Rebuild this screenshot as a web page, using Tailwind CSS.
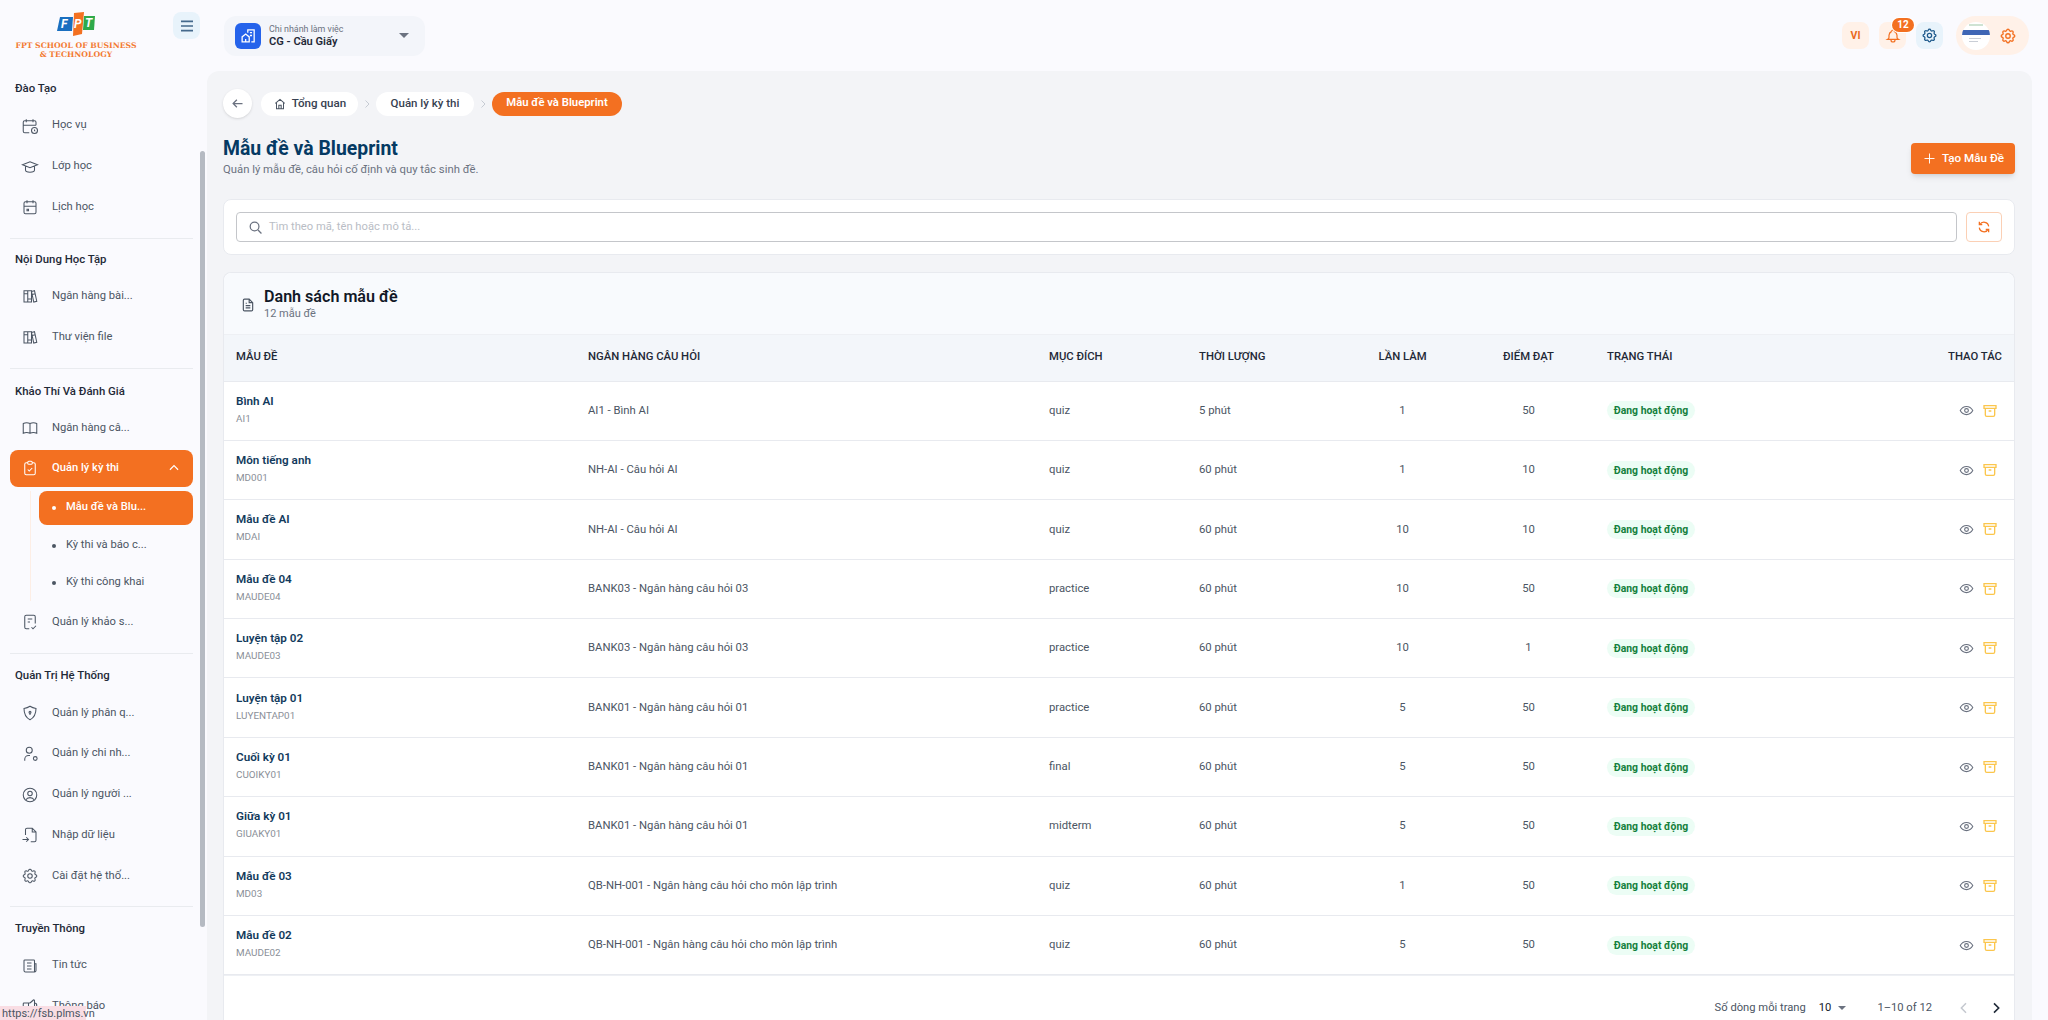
<!DOCTYPE html>
<html lang="vi">
<head>
    <meta charset="UTF-8">
    <title>Mẫu đề và Blueprint</title>
    <script src="https://cdn.jsdelivr.net/npm/@tailwindcss/browser@4"></script>
</head>
<body class="h-screen flex overflow-hidden bg-[#fafafe] font-[Roboto,sans-serif] text-[11.2px] text-[#4b5563]">
    <!-- icon sprite -->
    <svg class="hidden">
        <symbol id="i-cal-clock" viewBox="0 0 24 24"><path d="M11 21H5a2 2 0 0 1-2-2V7a2 2 0 0 1 2-2h13a2 2 0 0 1 2 2v4M16 3v4M7 3v4M3 11h17"/><circle cx="18" cy="18" r="4"/><path d="M18 16.500V18l1 1"/></symbol>
        <symbol id="i-cap" viewBox="0 0 24 24"><path d="M22 9 12 5 2 9l10 4 10-4ZM6 11v5c0 1.700 2.700 3 6 3s6-1.300 6-3v-5"/></symbol>
        <symbol id="i-cal" viewBox="0 0 24 24"><rect x="4" y="5" width="16" height="16" rx="2"/><path d="M16 3v4M8 3v4M4 11h16M8 15h2v2H8z"/></symbol>
        <symbol id="i-books" viewBox="0 0 24 24"><path d="M4 5h5v15H4zM9 5h5v15H9zM4 9h5M9 16h5M14 6l4-1 3 14-4 1zM15 10l4-1"/></symbol>
        <symbol id="i-book" viewBox="0 0 24 24"><path d="M3 19V6c3-1.500 6-1.500 9 0 3-1.500 6-1.500 9 0v13c-3-1.500-6-1.500-9 0-3-1.500-6-1.500-9 0ZM12 6v13"/></symbol>
        <symbol id="i-clip" viewBox="0 0 24 24"><path d="M9 5H7a2 2 0 0 0-2 2v12a2 2 0 0 0 2 2h10a2 2 0 0 0 2-2V7a2 2 0 0 0-2-2h-2"/><rect x="9" y="3" width="6" height="4" rx="1.500"/><path d="m9 14 2 2 4-4"/></symbol>
        <symbol id="i-survey" viewBox="0 0 24 24"><path d="M11 21H7a2 2 0 0 1-2-2V5a2 2 0 0 1 2-2h10a2 2 0 0 1 2 2v9M9 8h6M9 12h3M14 19l2 2 4-4"/></symbol>
        <symbol id="i-shield" viewBox="0 0 24 24"><path d="M12 3c3 2 5.500 2.600 8 3 0 7-2 12-8 15-6-3-8-8-8-15 2.500-.4 5-1 8-3Z"/><circle cx="12" cy="11" r="1.300"/><path d="M12 12v2.500"/></symbol>
        <symbol id="i-branch" viewBox="0 0 24 24"><circle cx="11" cy="7" r="4"/><path d="M5 21v-2a5 5 0 0 1 5-5h2"/><circle cx="19" cy="18" r="2.500"/></symbol>
        <symbol id="i-user" viewBox="0 0 24 24"><circle cx="12" cy="12" r="9"/><circle cx="12" cy="10" r="3"/><path d="M6.500 18.500c1-2 3-3 5.500-3s4.500 1 5.500 3"/></symbol>
        <symbol id="i-import" viewBox="0 0 24 24"><path d="M6 12V5a2 2 0 0 1 2-2h7l5 5v11a2 2 0 0 1-2 2h-5M15 3v5h5M2 18h8M7 15l3 3-3 3"/></symbol>
        <symbol id="i-gear" viewBox="0 0 24 24"><path d="M10.300 4.300c.4-1.800 3-1.800 3.400 0a1.700 1.700 0 0 0 2.600 1.100c1.500-.9 3.300.8 2.400 2.400a1.700 1.700 0 0 0 1 2.500c1.800.4 1.800 3 0 3.400a1.700 1.700 0 0 0-1 2.600c.9 1.500-.9 3.300-2.400 2.400a1.700 1.700 0 0 0-2.600 1c-.4 1.800-3 1.800-3.400 0a1.700 1.700 0 0 0-2.600-1c-1.500.9-3.300-.9-2.400-2.400a1.700 1.700 0 0 0-1-2.600c-1.800-.4-1.800-3 0-3.400a1.700 1.700 0 0 0 1-2.500c-.9-1.600.9-3.300 2.400-2.400a1.700 1.700 0 0 0 2.600-1.100Z"/><circle cx="12" cy="12" r="3"/></symbol>
        <symbol id="i-news" viewBox="0 0 24 24"><path d="M5 4h12a1 1 0 0 1 1 1v15H6a2 2 0 0 1-2-2V5a1 1 0 0 1 1-1ZM18 9h2v9a2 2 0 0 1-2 2M8 8h6M8 12h6M8 16h6"/></symbol>
        <symbol id="i-megaphone" viewBox="0 0 24 24"><path d="M18 8a3 3 0 0 1 0 6M10 8v11a1 1 0 0 1-1 1H8a1 1 0 0 1-1-1v-5M12 8l4.500-4a1 1 0 0 1 1.500.8v12.400a1 1 0 0 1-1.500.8L12 14H4a1 1 0 0 1-1-1V9a1 1 0 0 1 1-1h8"/></symbol>
        <symbol id="i-eye" viewBox="0 0 24 24"><path d="M2 12c2.500-4.500 6-6.500 10-6.500s7.500 2 10 6.500c-2.500 4.500-6 6.500-10 6.500S4.500 16.500 2 12Z"/><circle cx="12" cy="12" r="3"/></symbol>
        <symbol id="i-archive" viewBox="0 0 24 24"><path d="M3 4h18v4H3zM5 8v10a2 2 0 0 0 2 2h10a2 2 0 0 0 2-2V8M10 12h4"/></symbol>
    </svg>

    <!-- sidebar -->
    <aside class="relative w-[207px] shrink-0 overflow-hidden">
        <div class="relative h-[71.500px]">
            <div class="flex flex-col items-center w-[152px] pt-[12px]">
                <svg width="42" height="24" viewBox="0 0 40 24">
                    <path d="M4 5h13l-1 14H1z" fill="#1a6fc0"/>
                    <path d="M18 1l10-1-2 22-9 2z" fill="#f37021"/>
                    <path d="M28 4h11l-1 14H27z" fill="#2eaa4a"/>
                    <text x="5" y="16" fill="#fff" font-size="12" font-weight="700" font-style="italic">F</text>
                    <text x="18" y="16" fill="#fff" font-size="12" font-weight="700" font-style="italic">P</text>
                    <text x="29" y="15" fill="#fff" font-size="12" font-weight="700" font-style="italic">T</text>
                </svg>
                <div class="mt-[5px] text-center font-['DejaVu_Serif',serif] font-bold text-[7.700px] leading-[9px] whitespace-nowrap text-[#f37b33]">FPT SCHOOL OF BUSINESS<br>&amp; TECHNOLOGY</div>
            </div>
            <button class="absolute left-[173px] top-[12px] w-[27px] h-[27px] rounded-lg bg-[#e8f3fb] flex items-center justify-center">
                <svg class="w-[16px] h-[16px] stroke-[#44698c]" viewBox="0 0 24 24" fill="none" stroke-width="2.400"><path d="M3 5h18M3 12h18M3 19h18"/></svg>
            </button>
        </div>

        <nav class="pl-[10px] w-[193px] stroke-[#4b5563]">
            <h3 class="h-[34px] pl-[5px] flex items-center font-medium text-[11.400px] text-[#1f2937]">Đào Tạo</h3>
            <a class="h-[40.700px] flex items-center"><svg class="ml-[11px] w-[18px] h-[18px]" fill="none" stroke-width="1.400"><use href="#i-cal-clock"/></svg><span class="ml-[13px]">Học vụ</span></a>
            <a class="h-[40.700px] flex items-center"><svg class="ml-[11px] w-[18px] h-[18px]" fill="none" stroke-width="1.400"><use href="#i-cap"/></svg><span class="ml-[13px]">Lớp học</span></a>
            <a class="h-[40.700px] flex items-center"><svg class="ml-[11px] w-[18px] h-[18px]" fill="none" stroke-width="1.400"><use href="#i-cal"/></svg><span class="ml-[13px]">Lịch học</span></a>
            <hr class="mt-[10px] mb-[4.500px] border-[#e9ebef]">

            <h3 class="h-[33px] pl-[5px] flex items-center font-medium text-[11.400px] text-[#1f2937]">Nội Dung Học Tập</h3>
            <a class="h-[40.700px] flex items-center"><svg class="ml-[11px] w-[18px] h-[18px]" fill="none" stroke-width="1.400"><use href="#i-books"/></svg><span class="ml-[13px]">Ngân hàng bài...</span></a>
            <a class="h-[40.700px] flex items-center"><svg class="ml-[11px] w-[18px] h-[18px]" fill="none" stroke-width="1.400"><use href="#i-books"/></svg><span class="ml-[13px]">Thư viện file</span></a>
            <hr class="mt-[11px] mb-[5.500px] border-[#e9ebef]">

            <h3 class="h-[33px] pl-[5px] flex items-center font-medium text-[11.400px] text-[#1f2937]">Khảo Thí Và Đánh Giá</h3>
            <a class="h-[40.700px] flex items-center"><svg class="ml-[11px] w-[18px] h-[18px]" fill="none" stroke-width="1.400"><use href="#i-book"/></svg><span class="ml-[13px]">Ngân hàng câ...</span></a>
            <a class="mt-[1px] h-[37.500px] flex items-center rounded-lg bg-[#f37021] text-white font-medium stroke-white"><svg class="ml-[11px] w-[18px] h-[18px]" fill="none" stroke-width="1.400"><use href="#i-clip"/></svg><span class="ml-[13px]">Quản lý kỳ thi</span>
                <svg class="ml-auto mr-[12px] w-[14px] h-[14px]" viewBox="0 0 24 24" fill="none" stroke-width="2"><path d="m5 15 7-7 7 7"/></svg>
            </a>
            <div class="relative mt-[3.500px] pl-[29px]">
                <div class="absolute left-[20px] top-0 h-[110px] w-px bg-[#fdeee5]"></div>
                <a class="h-[34.500px] flex items-center rounded-lg bg-[#f37021] text-white font-medium"><span class="ml-[13px] w-[4px] h-[4px] rounded-full bg-white"></span><span class="ml-[10px]">Mẫu đề và Blu...</span></a>
                <a class="mt-[2px] h-[37px] flex items-center"><span class="ml-[13px] w-[4px] h-[4px] rounded-full bg-[#4b5563]"></span><span class="ml-[10px]">Kỳ thi và báo c...</span></a>
                <a class="h-[37px] flex items-center"><span class="ml-[13px] w-[4px] h-[4px] rounded-full bg-[#4b5563]"></span><span class="ml-[10px]">Kỳ thi công khai</span></a>
            </div>
            <a class="mt-[1px] h-[40.700px] flex items-center"><svg class="ml-[11px] w-[18px] h-[18px]" fill="none" stroke-width="1.400"><use href="#i-survey"/></svg><span class="ml-[13px]">Quản lý khảo s...</span></a>
            <hr class="mt-[10.500px] mb-[4.500px] border-[#e9ebef]">

            <h3 class="h-[34px] pl-[5px] flex items-center font-medium text-[11.400px] text-[#1f2937]">Quản Trị Hệ Thống</h3>
            <a class="h-[40.700px] flex items-center"><svg class="ml-[11px] w-[18px] h-[18px]" fill="none" stroke-width="1.400"><use href="#i-shield"/></svg><span class="ml-[13px]">Quản lý phân q...</span></a>
            <a class="h-[40.700px] flex items-center"><svg class="ml-[11px] w-[18px] h-[18px]" fill="none" stroke-width="1.400"><use href="#i-branch"/></svg><span class="ml-[13px]">Quản lý chi nh...</span></a>
            <a class="h-[40.700px] flex items-center"><svg class="ml-[11px] w-[18px] h-[18px]" fill="none" stroke-width="1.400"><use href="#i-user"/></svg><span class="ml-[13px]">Quản lý người ...</span></a>
            <a class="h-[40.700px] flex items-center"><svg class="ml-[11px] w-[18px] h-[18px]" fill="none" stroke-width="1.400"><use href="#i-import"/></svg><span class="ml-[13px]">Nhập dữ liệu</span></a>
            <a class="h-[40.700px] flex items-center"><svg class="ml-[11px] w-[18px] h-[18px]" fill="none" stroke-width="1.400"><use href="#i-gear"/></svg><span class="ml-[13px]">Cài đặt hệ thố...</span></a>
            <hr class="mt-[10px] mb-[5px] border-[#e9ebef]">

            <h3 class="h-[33px] pl-[5px] flex items-center font-medium text-[11.400px] text-[#1f2937]">Truyền Thông</h3>
            <a class="h-[40.700px] flex items-center"><svg class="ml-[11px] w-[18px] h-[18px]" fill="none" stroke-width="1.400"><use href="#i-news"/></svg><span class="ml-[13px]">Tin tức</span></a>
            <a class="h-[40.700px] flex items-center"><svg class="ml-[11px] w-[18px] h-[18px]" fill="none" stroke-width="1.400"><use href="#i-megaphone"/></svg><span class="ml-[13px]">Thông báo</span></a>
        </nav>

        <!-- scrollbar thumb -->
        <div class="absolute left-[200px] top-[151px] w-[5px] h-[776px] rounded-full bg-[#b5bac2]"></div>
    </aside>

    <div class="flex-1 min-w-0 flex flex-col">
        <!-- top bar -->
        <header class="h-[71px] shrink-0 flex items-center pl-[17px] pr-[19px]">
            <div class="w-[201px] h-[40px] rounded-xl bg-[#f3f5fa] flex items-center pl-[11px]">
                <span class="w-[26px] h-[26px] rounded-md bg-[#2563eb] flex items-center justify-center">
                    <svg class="w-[17px] h-[17px] stroke-white" viewBox="0 0 24 24" fill="none" stroke-width="1.800"><path d="M3 21v-7l5-4 5 4v7zM8 21v-4M11 8V4h9v17h-4M14 8h3M14 12h3"/></svg>
                </span>
                <div class="ml-[8px] flex flex-col">
                    <span class="text-[8.900px] leading-[12px] text-[#6b7280]">Chi nhánh làm việc</span>
                    <span class="text-[11.100px] leading-[14px] font-semibold text-[#1f2937]">CG - Cầu Giấy</span>
                </div>
                <span class="ml-auto mr-[16px] w-0 h-0 border-x-[5px] border-x-transparent border-t-[5px] border-t-[#6b7280]"></span>
            </div>
            <div class="ml-auto flex items-center">
                <button class="w-[27px] h-[27px] rounded-lg bg-[#fff1e8] text-[10.500px] font-bold text-[#ea6a20]">VI</button>
                <button class="relative ml-[10px] w-[27px] h-[27px] rounded-lg bg-[#fff1e8] flex items-center justify-center">
                    <svg class="w-[16px] h-[16px] stroke-[#f37021]" viewBox="0 0 24 24" fill="none" stroke-width="1.800"><path d="M10 5a2 2 0 1 1 4 0 7 7 0 0 1 4 6v3a4 4 0 0 0 2 3H4a4 4 0 0 0 2-3v-3a7 7 0 0 1 4-6M9 17v1a3 3 0 0 0 6 0v-1"/></svg>
                    <span class="absolute left-[13px] top-[-4px] w-[22px] h-[14px] rounded-full bg-[#f37021] ring-1 ring-white text-[10px] leading-[14px] font-bold text-white">12</span>
                </button>
                <button class="ml-[10px] w-[27px] h-[27px] rounded-lg bg-[#e8f3fb] flex items-center justify-center">
                    <svg class="w-[17px] h-[17px] stroke-[#1f5a8c]" fill="none" stroke-width="1.800"><use href="#i-gear"/></svg>
                </button>
                <div class="ml-[13px] w-[73px] h-[39px] rounded-full bg-[#fff1e8] flex items-center pl-[6px]">
                    <div class="w-[28px] h-[28px] rounded-full bg-white overflow-hidden flex flex-col">
                        <div class="mt-[2px] mx-[7px] h-[2px] bg-[#cfe3d3]"></div>
                        <div class="mt-[4px] h-[5px] bg-[#3f66b5]"></div>
                        <div class="mt-[3px] ml-[7px] w-[12px] h-px bg-[#c9ced6]"></div>
                        <div class="mt-[2px] ml-[7px] w-[9px] h-px bg-[#c9ced6]"></div>
                    </div>
                    <svg class="ml-[9px] w-[18px] h-[18px] stroke-[#f37021]" fill="none" stroke-width="1.800"><use href="#i-gear"/></svg>
                </div>
            </div>
        </header>

        <!-- content -->
        <main class="flex-1 min-h-0 mr-[16px] pl-[16px] pr-[17px] rounded-t-xl bg-[#f3f4f7] overflow-hidden">
            <div class="pt-[18px] flex items-center">
                <button class="w-[29px] h-[29px] rounded-full bg-white shadow-sm flex items-center justify-center">
                    <svg class="w-[15px] h-[15px] stroke-[#6b7280]" viewBox="0 0 24 24" fill="none" stroke-width="2"><path d="M20 12H5M11 6l-6 6 6 6"/></svg>
                </button>
                <a class="ml-[9px] h-[24px] w-[97px] rounded-full bg-white flex items-center justify-center font-medium text-[11.600px] text-[#374151]">
                    <svg class="mr-[5px] w-[14px] h-[14px] stroke-[#4b5563]" viewBox="0 0 24 24" fill="none" stroke-width="1.800"><path d="M4 11l8-7 8 7M6 9v11h12V9M10 20v-6h4v6"/></svg>Tổng quan
                </a>
                <svg class="mx-[3px] w-[12px] h-[12px] stroke-[#c6cbd3]" viewBox="0 0 24 24" fill="none" stroke-width="2"><path d="m9 5 7 7-7 7"/></svg>
                <a class="h-[24px] w-[98px] rounded-full bg-white flex items-center justify-center font-medium text-[11.500px] text-[#374151]">Quản lý kỳ thi</a>
                <svg class="mx-[3px] w-[12px] h-[12px] stroke-[#c6cbd3]" viewBox="0 0 24 24" fill="none" stroke-width="2"><path d="m9 5 7 7-7 7"/></svg>
                <a class="h-[24px] w-[130px] rounded-full bg-[#f37021] flex items-center justify-center font-semibold text-[11.300px] text-white">Mẫu đề và Blueprint</a>
            </div>

            <div class="mt-[18px] flex items-start justify-between">
                <div>
                    <h1 class="text-[19.400px] leading-[26px] font-bold text-[#053a63]">Mẫu đề và Blueprint</h1>
                    <p class="text-[11.300px] leading-[16px] text-[#6b7280]">Quản lý mẫu đề, câu hỏi cố định và quy tắc sinh đề.</p>
                </div>
                <button class="mt-[7px] w-[104px] h-[31px] rounded bg-[#f37021] shadow-md flex items-center justify-center text-[11.700px] text-white font-medium">
                    <svg class="mr-[5px] w-[15px] h-[15px] stroke-white" viewBox="0 0 24 24" fill="none" stroke-width="1.500"><path d="M12 4v16M4 12h16"/></svg>Tạo Mẫu Đề
                </button>
            </div>

            <!-- search -->
            <div class="mt-[21px] h-[56px] rounded-lg bg-white border border-[#e8eaef] flex items-center px-[12px]">
                <div class="flex-1 h-[30px] rounded border border-[#c4c6ca] flex items-center pl-[11px]">
                    <svg class="w-[15px] h-[15px] stroke-[#6b7280]" viewBox="0 0 24 24" fill="none" stroke-width="2"><circle cx="10.500" cy="10.500" r="7"/><path d="m16 16 5.500 5.500"/></svg>
                    <span class="ml-[6px] text-[#b9bdc5]">Tìm theo mã, tên hoặc mô tả...</span>
                </div>
                <button class="ml-[9px] w-[36px] h-[30px] rounded border border-[#fbd0b5] flex items-center justify-center">
                    <svg class="w-[14px] h-[14px] stroke-[#f37021]" viewBox="0 0 24 24" fill="none" stroke-width="2.200"><path d="M20 11A8 8 0 0 0 5 8M4 3v5h5M4 13a8 8 0 0 0 15 3M20 21v-5h-5"/></svg>
                </button>
            </div>

            <!-- list -->
            <section class="mt-[17px] rounded-t-lg bg-white border-x border-t border-[#e8eaef]">
                <div class="h-[62px] rounded-t-lg bg-[#f8fafd] flex items-center pl-[17px] border-b border-[#eef0f4]">
                    <svg class="w-[14px] h-[16px] mt-[2px] stroke-[#4b5563]" viewBox="0 0 24 24" fill="none" stroke-width="2"><path d="M14 2H6a2 2 0 0 0-2 2v16a2 2 0 0 0 2 2h12a2 2 0 0 0 2-2V8zM14 2v6h6M8 13h8M8 17h8M8 9h2"/></svg>
                    <div class="ml-[9px]">
                        <h2 class="text-[16.100px] leading-[21px] font-semibold text-[#111827]">Danh sách mẫu đề</h2>
                        <p class="text-[11px] leading-[14px] text-[#6b7280]">12 mẫu đề</p>
                    </div>
                </div>
                <table class="w-full table-fixed border-collapse">
                    <thead>
                        <tr class="h-[46px] bg-[#f3f6fa] border-b border-[#e8eaef] text-[11.300px] font-medium uppercase text-[#1f2937]">
                            <th class="w-[363px] pl-[12px] text-left font-medium">Mẫu đề</th>
                            <th class="w-[462px] pl-[1px] text-left font-medium">Ngân hàng câu hỏi</th>
                            <th class="w-[150px] text-left font-medium">Mục đích</th>
                            <th class="w-[140px] text-left font-medium">Thời lượng</th>
                            <th class="w-[127px] text-center font-medium">Lần làm</th>
                            <th class="w-[125px] text-center font-medium">Điểm đạt</th>
                            <th class="w-[130px] pl-[16px] text-left font-medium">Trạng thái</th>
                            <th class="pr-[12px] text-right font-medium">Thao tác</th>
                        </tr>
                    </thead>
                    <tbody id="rows"></tbody>
                </table>
                <div class="h-[64px] flex items-center justify-end border-t border-[#eef0f4] text-[11.200px] text-[#4b5563]">
                    <span>Số dòng mỗi trang</span>
                    <span class="ml-[13px] text-[#111827]">10</span>
                    <span class="ml-[7px] w-0 h-0 border-x-[4px] border-x-transparent border-t-[4px] border-t-[#6b7280]"></span>
                    <span class="ml-[31px]">1–10 of 12</span>
                    <svg class="ml-[24px] w-[16px] h-[16px] stroke-[#c4c8cf]" viewBox="0 0 24 24" fill="none" stroke-width="2.200"><path d="m15 5-7 7 7 7"/></svg>
                    <svg class="ml-[16px] mr-[10px] w-[16px] h-[16px] stroke-[#1f2937]" viewBox="0 0 24 24" fill="none" stroke-width="2.400"><path d="m9 5 7 7-7 7"/></svg>
                </div>
            </section>
        </main>
    </div>

    <!-- link status bubble -->
    <div class="absolute left-0 bottom-0 h-[14px] w-[86px] bg-[#f9dde4] text-[11px] leading-[15px] pl-[2px] text-[#4b5563]">https://fsb.plms.vn</div>

    <script>
        const rows = [
            ['Bình AI', 'AI1', 'AI1 - Bình AI', 'quiz', '5 phút', 1, 50],
            ['Môn tiếng anh', 'MD001', 'NH-AI - Câu hỏi AI', 'quiz', '60 phút', 1, 10],
            ['Mẫu đề AI', 'MDAI', 'NH-AI - Câu hỏi AI', 'quiz', '60 phút', 10, 10],
            ['Mẫu đề 04', 'MAUDE04', 'BANK03 - Ngân hàng câu hỏi 03', 'practice', '60 phút', 10, 50],
            ['Luyện tập 02', 'MAUDE03', 'BANK03 - Ngân hàng câu hỏi 03', 'practice', '60 phút', 10, 1],
            ['Luyện tập 01', 'LUYENTAP01', 'BANK01 - Ngân hàng câu hỏi 01', 'practice', '60 phút', 5, 50],
            ['Cuối kỳ 01', 'CUOIKY01', 'BANK01 - Ngân hàng câu hỏi 01', 'final', '60 phút', 5, 50],
            ['Giữa kỳ 01', 'GIUAKY01', 'BANK01 - Ngân hàng câu hỏi 01', 'midterm', '60 phút', 5, 50],
            ['Mẫu đề 03', 'MD03', 'QB-NH-001 - Ngân hàng câu hỏi cho môn lập trình', 'quiz', '60 phút', 1, 50],
            ['Mẫu đề 02', 'MAUDE02', 'QB-NH-001 - Ngân hàng câu hỏi cho môn lập trình', 'quiz', '60 phút', 5, 50],
        ];
        document.getElementById('rows').innerHTML = rows.map(r => `
            <tr class="h-[59.400px] border-b border-[#e8eaef] text-[11.300px] text-[#4b5563]">
                <td class="pl-[12px] pb-[2px]">
                    <div class="text-[11.700px] leading-[17px] font-semibold text-[#123a5c]">${r[0]}</div>
                    <div class="mt-[1px] text-[9.900px] leading-[16px] text-[#8a8f98]">${r[1]}</div>
                </td>
                <td class="pl-[1px] pt-[1px]">${r[2]}</td>
                <td class="pt-[1px]">${r[3]}</td>
                <td class="pt-[1px]">${r[4]}</td>
                <td class="pt-[1px] text-center">${r[5]}</td>
                <td class="pt-[1px] text-center">${r[6]}</td>
                <td class="pl-[16px]"><span class="inline-block w-[88px] h-[19px] rounded-full bg-[#ecfdf5] text-center text-[10.400px] leading-[19px] font-bold whitespace-nowrap text-[#15803d]">Đang hoạt động</span></td>
                <td class="pr-[16px]">
                    <div class="flex justify-end items-center gap-[8.500px]">
                        <svg class="w-[15px] h-[15px] stroke-[#6b7280]" fill="none" stroke-width="1.800"><use href="#i-eye"/></svg>
                        <svg class="w-[16px] h-[16px] stroke-[#fbc64d]" fill="none" stroke-width="2"><use href="#i-archive"/></svg>
                    </div>
                </td>
            </tr>`).join('');
    </script>
</body>
</html>
